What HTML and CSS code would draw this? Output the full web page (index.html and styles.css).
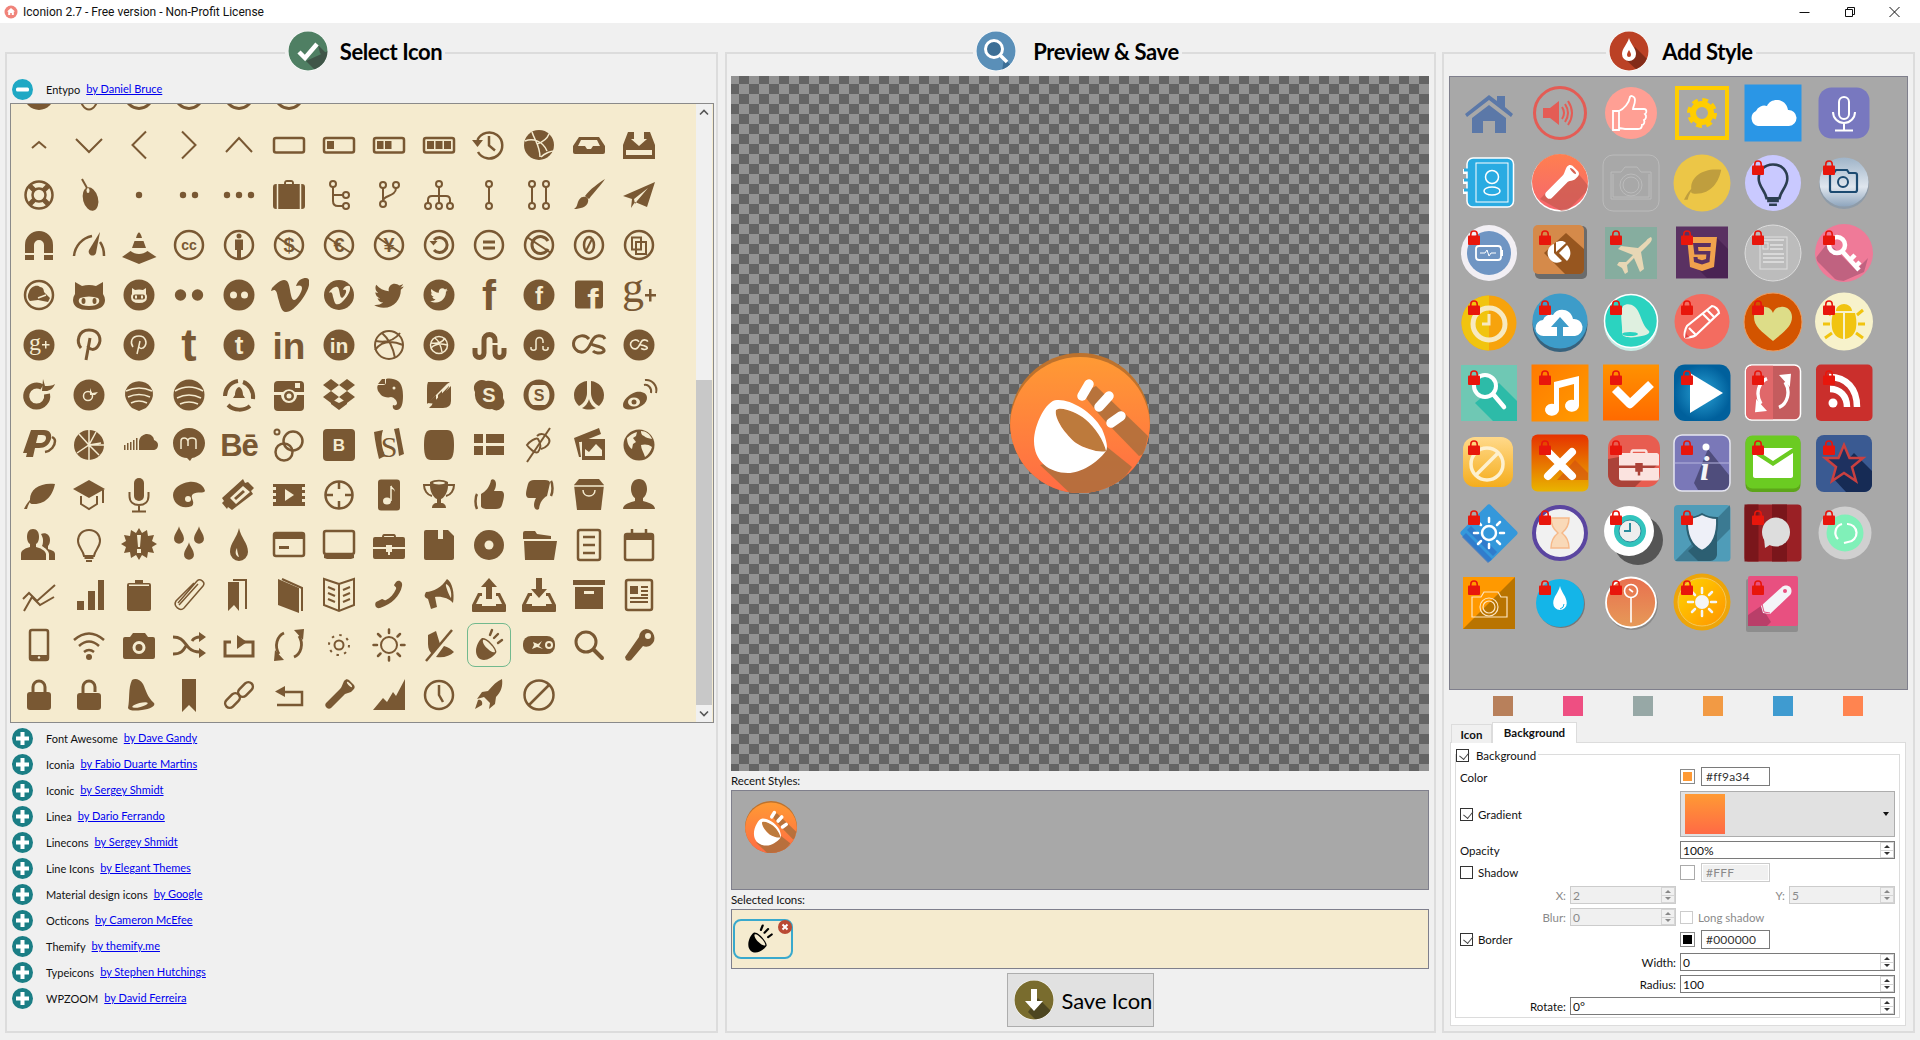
FILE: index.html
```html
<!DOCTYPE html>
<html lang="en">
<head>
<meta charset="utf-8">
<title>Iconion 2.7</title>
<link rel="stylesheet" href="styles.css">
</head>
<body>
<svg class="defs" aria-hidden="true">
<defs>
<linearGradient id="gOr" x1="0" y1="0" x2="0" y2="1"><stop offset="0" stop-color="#ff9a34"/><stop offset="1" stop-color="#ff6a45"/></linearGradient>
<linearGradient id="gFl" x1="0" y1="0" x2="0" y2="1"><stop offset="0" stop-color="#ff7f50"/><stop offset="1" stop-color="#f5666e"/></linearGradient>
<linearGradient id="gCam" x1="0" y1="0" x2="0" y2="1"><stop offset="0" stop-color="#9fb4c8"/><stop offset=".6" stop-color="#dfe6ee"/><stop offset="1" stop-color="#8ea5bd"/></linearGradient>
<linearGradient id="gMus" x1="0" y1="0" x2="1" y2="1"><stop offset="0" stop-color="#ff7a00"/><stop offset="1" stop-color="#ff9c00"/></linearGradient>
<linearGradient id="gChk" x1="0" y1="0" x2="0" y2="1"><stop offset="0" stop-color="#ff9200"/><stop offset="1" stop-color="#ff6a00"/></linearGradient>
<radialGradient id="gPlay"><stop offset="0" stop-color="#2aa3d6"/><stop offset="1" stop-color="#00609c"/></radialGradient>
<linearGradient id="gBlk" x1="0" y1="0" x2="0" y2="1"><stop offset="0" stop-color="#ffd98a"/><stop offset="1" stop-color="#f5ad1c"/></linearGradient>
<linearGradient id="gX" x1="0" y1="0" x2="0" y2="1"><stop offset="0" stop-color="#e63200"/><stop offset="1" stop-color="#e9b400"/></linearGradient>
<linearGradient id="gPin" x1="0" y1="0" x2="0" y2="1"><stop offset="0" stop-color="#e8704f"/><stop offset="1" stop-color="#e69a58"/></linearGradient>
<linearGradient id="gSun" x1="0" y1="0" x2="1" y2="1"><stop offset="0" stop-color="#ffd400"/><stop offset="1" stop-color="#ff9400"/></linearGradient>
<clipPath id="cBig"><circle cx="70" cy="70" r="70"/></clipPath>
<clipPath id="cH"><circle cx="20" cy="20" r="19.5"/></clipPath>
<clipPath id="c60"><circle cx="30" cy="30" r="28"/></clipPath>
<symbol id="beam" viewBox="0 0 40 40"><path d="M13 13c-3 2-6 8-6 13 0 5 3 9 8 9 4 0 9-3 12-7 1-1 0-3-1-5-3-5-9-11-13-10zm1 2c-1 2 2 7 5 9 2 2 5 4 7 3 0-3-3-6-5-8-2-2-5-5-7-4z" fill-rule="evenodd"/><path d="M23 5l-2 5M29 9l-4 4M33 15l-4 3" fill="none" stroke="currentColor" stroke-width="2.4" stroke-linecap="round"/></symbol>
<symbol id="beamBig" viewBox="0 0 140 140">
<circle cx="70" cy="70" r="70" fill="#bd722d"/>
<g clip-path="url(#cBig)"><circle cx="70" cy="74" r="70" fill="url(#gOr)"/>
<path fill="#ab6e3c" fill-opacity=".85" d="M72 40l14-7 52 50-4 18-5 2-33-34-8-9z"/>
<path fill="#ab6e3c" fill-opacity=".85" d="M30 112l32 30h40l20-28-25-20z"/></g>
<path fill="#bd7a3c" d="M46 57c-2 9 10 25 20 33 9 6 24 10 30 8-2-10-11-24-21-32-8-6-23-13-29-9z"/>
<path fill="#fff" fill-rule="evenodd" d="M47 47C36 47 24 72 24 88c0 20 15 32 34 32 13 0 29-10 38-22 2-3 1-10-4-22C82 58 60 46 47 47zm-1 10c-2 9 10 25 20 33 9 6 24 10 30 8-2-10-11-24-21-32-8-6-23-13-29-9z"/>
<path d="M79 31l-7 12M99 43L89 54M111 63l-10 7" fill="none" stroke="#fff" stroke-width="9.5" stroke-linecap="round"/>
</symbol>
<symbol id="lk" viewBox="0 0 12 15"><path d="M2.8 7V4.2a3.2 3.2 0 0 1 6.4 0V7" fill="none" stroke="#e8160c" stroke-width="1.6"/><rect y="5.6" width="12" height="9.4" rx="1" fill="#e8160c"/></symbol>
<symbol id="leaf" viewBox="0 0 40 40"><path d="M5 34c3-6 6-10 12-14 5-3 9-5 13-6-6 2-12 5-16 9-3 3-5 7-6 11zM11 24C11 14 22 7 36 9c-2 10-8 20-21 20-2 0-3 0-4-1z"/></symbol>
<symbol id="bulb" viewBox="0 0 40 40"><path d="M20 5c-7 0-11 5-11 11 0 6 5 9 6 15h10c1-6 6-9 6-15 0-6-4-11-11-11z" fill="none" stroke="currentColor" stroke-width="2"/><path d="M15.5 31h9v3h-9zM17 35h6v2h-6z"/></symbol>
<symbol id="cam" viewBox="0 0 40 40"><path fill-rule="evenodd" d="M14 8h12l3 4h5a2 2 0 0 1 2 2v18a2 2 0 0 1-2 2H6a2 2 0 0 1-2-2V14a2 2 0 0 1 2-2h5zm6 8a6.5 6.5 0 1 0 0 13 6.500 6.500 0 0 0 0-13zm0 3a3.500 3.500 0 1 1 0 7 3.500 3.500 0 0 1 0-7z"/></symbol>
<symbol id="case" viewBox="0 0 40 40"><path d="M15 9h10c1 0 2 1 2 3h7a2 2 0 0 1 2 2v8H23v-2h-6v2H4v-8a2 2 0 0 1 2-2h7c0-2 1-3 2-3zm0 3h10c0-1 0-1-1-1h-8c-1 0-1 0-1 1zM4 24h13v3h2v3h2v-3h2v-3h13v8a2 2 0 0 1-2 2H6a2 2 0 0 1-2-2z" fill-rule="evenodd"/></symbol>
<symbol id="srch" viewBox="0 0 40 40"><circle cx="17" cy="17" r="10" fill="none" stroke="currentColor" stroke-width="3"/><path d="M24.500 24.500L33 33" fill="none" stroke="currentColor" stroke-width="4" stroke-linecap="round"/></symbol>
<symbol id="cyc" viewBox="0 0 40 40"><path d="M15 8C8 11 5 21 10 29M25 32c7-3 10-13 5-21" fill="none" stroke="currentColor" stroke-width="2.800"/><path d="M6 25l9 10-10 1zM34 15L25 5l10-1z"/></symbol>
<symbol id="drop" viewBox="0 0 40 40"><path d="M20 4c2 9 9 14 9 23a9 9 0 0 1-18 0c0-9 7-14 9-23z"/></symbol>
<symbol id="fl" viewBox="0 0 40 40"><path fill-rule="evenodd" d="M25 6c2-2 3-2 5-1l5 5c1 2 1 3-1 5l-2 2c-2 1-4 1-6 2L12 33c-1 1-3 1-4 0l-1-1c-1-1-1-3 0-4L21 14c2-2 2-4 4-8zM28 7c-1 1 4 6 5 5s-4-6-5-5z"/></symbol>
<symbol id="tw" viewBox="0 0 24 24"><path d="M22.460 6c-.77.35-1.600.58-2.460.69.88-.53 1.560-1.370 1.880-2.380-.83.5-1.750.85-2.720 1.050C18.370 4.500 17.260 4 16 4c-2.350 0-4.270 1.920-4.270 4.290 0 .34.04.67.11.98C8.280 9.090 5.110 7.380 3 4.790c-.37.63-.58 1.370-.58 2.150 0 1.490.75 2.810 1.910 3.560-.71 0-1.370-.2-1.950-.5v.03c0 2.080 1.480 3.820 3.440 4.210a4.220 4.220 0 0 1-1.930.07 4.280 4.280 0 0 0 4 2.980 8.520 8.520 0 0 1-5.330 1.840c-.34 0-.68-.02-1.020-.06C3.440 20.290 5.700 21 8.120 21 16 21 20.330 14.460 20.330 8.790c0-.19 0-.37-.01-.56.84-.6 1.560-1.360 2.140-2.230z"/></symbol>
<symbol id="vim" viewBox="0 0 40 40"><path d="M3 13c4-4 8-8 12-8 4 0 5 4 6 10 1 6 2 10 4 10 3 0 8-8 8-12 0-3-3-3-6-2 2-6 6-8 10-8 3 0 4 3 3 7-1 8-14 27-23 27-5 0-6-8-8-14-1-6-2-8-4-8l-3 1z"/></symbol>
<symbol id="lfm" viewBox="0 0 40 40"><path d="M20 14C16 9 8 10 5 16c-2 6 3 12 9 11 5-1 7-7 9-11 2-4 5-6 9-5 2 0 3 1 4 3M22 19c2 1 6 2 9 3 4 1 5 4 3 5-3 2-8 1-10-1" fill="none" stroke="currentColor" stroke-width="3"/></symbol>
</defs>
</svg>

<header class="titlebar">
  <svg class="appicon" viewBox="0 0 14 14"><circle cx="7" cy="7" r="6.500" fill="#f0837a"/><path d="M7 3L3 6.500h1.200V10h2V8h1.600v2h2V6.500H11z" fill="#fff"/></svg>
  <span class="apptitle">Iconion 2.7 - Free version - Non-Profit License</span>
  <div class="winctl">
    <svg viewBox="0 0 45 20"><path d="M17.500 10.500h10" stroke="#111" fill="none"/></svg>
    <svg viewBox="0 0 45 20"><path d="M18.500 7.500h7v7h-7zM20.500 7.500v-2h7v7h-2" stroke="#111" fill="none"/></svg>
    <svg viewBox="0 0 45 20"><path d="M17.500 5l10 10M27.500 5l-10 10" stroke="#111" fill="none"/></svg>
  </div>
</header>

<main class="panels">

<section class="panel p-left">
  <div class="head h-left">
    <svg class="hicon" viewBox="0 0 40 40"><circle cx="20" cy="20" r="20" fill="#fff"/><circle cx="20" cy="20" r="19.500" fill="#4f7f63"/><path clip-path="url(#cH)" d="M18 30L40 20v20H28zM30 14l10 10v6l-8-8z" fill="#333" fill-opacity=".55"/><path d="M11 21l6 6 12-14" fill="none" stroke="#fff" stroke-width="4.500"/></svg>
    <h2>Select Icon</h2>
  </div>
  <div class="fam fam-open"><svg class="tog" viewBox="0 0 21 21"><circle cx="10.500" cy="10.500" r="10.500" fill="#1fa8c4"/><rect x="4" y="8.500" width="13" height="4" rx="1.500" fill="#fff"/></svg><span>Entypo</span><a href="#">by Daniel Bruce</a></div>

  <div class="iconbox">
    <div class="scrollarea">
    <div class="igrid">
<!-- partial row -->
<span class="cell"><svg viewBox="0 0 40 40"><circle cx="20" cy="20" r="15"/></svg></span>
<span class="cell"><svg viewBox="0 0 40 40"><ellipse class="o" cx="20" cy="20" rx="9" ry="14.500"/></svg></span>
<span class="cell"><svg viewBox="0 0 40 40"><circle class="o w3" cx="20" cy="20" r="13.500"/></svg></span>
<span class="cell"><svg viewBox="0 0 40 40"><circle class="o w3" cx="20" cy="20" r="13.500"/></svg></span>
<span class="cell"><svg viewBox="0 0 40 40"><circle class="o w3" cx="20" cy="20" r="13.500"/></svg></span>
<span class="cell"><svg viewBox="0 0 40 40"><circle class="o w3" cx="20" cy="20" r="13.500"/></svg></span>
<span class="cell"></span><span class="cell"></span><span class="cell"></span><span class="cell"></span><span class="cell"></span><span class="cell"></span><span class="cell"></span>

<!-- row 0 -->
<span class="cell"><svg viewBox="0 0 40 40"><path class="o" d="M13 23l7-6 7 6"/></svg></span>
<span class="cell"><svg viewBox="0 0 40 40"><path class="o" d="M7 14l13 13 13-13"/></svg></span>
<span class="cell"><svg viewBox="0 0 40 40"><path class="o" d="M27 6.500L13.500 20 27 33.500"/></svg></span>
<span class="cell"><svg viewBox="0 0 40 40"><path class="o" d="M13 6.500L26.500 20 13 33.500"/></svg></span>
<span class="cell"><svg viewBox="0 0 40 40"><path class="o" d="M7 27l13-14 13 14"/></svg></span>
<span class="cell"><svg viewBox="0 0 40 40"><rect class="o w25" x="5" y="13" width="30" height="14.500" rx="2"/></svg></span>
<span class="cell"><svg viewBox="0 0 40 40"><rect class="o w25" x="5" y="13" width="30" height="14.500" rx="2"/><rect x="8" y="16" width="7" height="8"/></svg></span>
<span class="cell"><svg viewBox="0 0 40 40"><rect class="o w25" x="5" y="13" width="30" height="14.500" rx="2"/><rect x="8" y="16" width="6.500" height="8"/><rect x="16" y="16" width="6.500" height="8"/></svg></span>
<span class="cell"><svg viewBox="0 0 40 40"><rect class="o w25" x="5" y="13" width="30" height="14.500" rx="2"/><rect x="8" y="16" width="7" height="8"/><rect x="16.500" y="16" width="7" height="8"/><rect x="25" y="16" width="7" height="8"/></svg></span>
<span class="cell"><svg viewBox="0 0 40 40"><path class="o w25" d="M8.500 15A13 13 0 1 1 9 27"/><path d="M3 15h11l-5.500 7z"/><path class="o w25" d="M20 11v9.500l6 5"/></svg></span>
<span class="cell"><svg viewBox="0 0 40 40"><circle cx="20" cy="20" r="15"/><path class="ks" d="M6 16c8-3 18 0 22 10M13 7c3 9 8 14 8 25M30 9c-2 5-6 8-12 10M22 32c4-4 10-6 13-6"/></svg></span>
<span class="cell"><svg viewBox="0 0 40 40"><path d="M10 12h20l6 9v6a2 2 0 0 1-2 2H6a2 2 0 0 1-2-2v-6z"/><path class="k" d="M12 15h16l3 6h-7l-2 3h-4l-2-3H9z"/></svg></span>
<span class="cell"><svg viewBox="0 0 40 40"><path d="M9 7h6v7h-3l8 7 8-7h-3V7h6l5 13v14H4V20z"/><rect class="k" x="7" y="25" width="26" height="5"/></svg></span>

<!-- row 1 -->
<span class="cell"><svg viewBox="0 0 40 40"><circle class="o w25" cx="20" cy="20" r="13.500"/><circle class="o w25" cx="20" cy="20" r="6.500"/><path class="o w5" d="M10 10l5.500 5.500M30 10l-5.500 5.500M10 30l5.500-5.500M30 30l-5.500-5.500"/></svg></span>
<span class="cell"><svg viewBox="0 0 40 40"><ellipse cx="21.500" cy="24" rx="7.500" ry="12" transform="rotate(-15 21.500 24)"/><path class="o" d="M13 4l5 9"/><ellipse class="k" cx="19" cy="15.500" rx="1.500" ry="2.500"/></svg></span>
<span class="cell"><svg viewBox="0 0 40 40"><circle cx="20" cy="20" r="3.200"/></svg></span>
<span class="cell"><svg viewBox="0 0 40 40"><circle cx="14" cy="20" r="3.200"/><circle cx="26" cy="20" r="3.200"/></svg></span>
<span class="cell"><svg viewBox="0 0 40 40"><circle cx="8" cy="20" r="3.200"/><circle cx="20" cy="20" r="3.200"/><circle cx="32" cy="20" r="3.200"/></svg></span>
<span class="cell"><svg viewBox="0 0 40 40"><path d="M15 9c0-3 1-4 3-4h4c2 0 3 1 3 4h8a3 3 0 0 1 3 3v19a3 3 0 0 1-3 3H7a3 3 0 0 1-3-3V12a3 3 0 0 1 3-3zm2 0h6c0-2 0-2-1-2h-4c-1 0-1 0-1 2z" fill-rule="evenodd"/><path class="ks" d="M8.500 9v25M31.500 9v25"/></svg></span>
<span class="cell"><svg viewBox="0 0 40 40"><circle class="o" cx="14" cy="9" r="3"/><circle class="o" cx="27" cy="20" r="3"/><circle class="o" cx="27" cy="31" r="3"/><path class="o" d="M14 12v14q0 5 5 5h5M14 20h10"/></svg></span>
<span class="cell"><svg viewBox="0 0 40 40"><circle class="o" cx="14" cy="10" r="3"/><circle class="o" cx="27" cy="10" r="3"/><circle class="o" cx="14" cy="29" r="3"/><path class="o" d="M14 13v13M27 13c0 9-13 7-13 13"/></svg></span>
<span class="cell"><svg viewBox="0 0 40 40"><circle class="o" cx="20" cy="9" r="3"/><circle class="o" cx="9" cy="31" r="3"/><circle class="o" cx="20" cy="31" r="3"/><circle class="o" cx="31" cy="31" r="3"/><path class="o" d="M20 12v16M9 28v-3q0-4 4-4h14q4 0 4 4v3"/></svg></span>
<span class="cell"><svg viewBox="0 0 40 40"><circle class="o" cx="20" cy="9" r="3"/><circle class="o" cx="20" cy="31" r="3"/><path class="o" d="M20 12v16"/></svg></span>
<span class="cell"><svg viewBox="0 0 40 40"><circle class="o" cx="13" cy="9" r="3"/><circle class="o" cx="13" cy="31" r="3"/><path class="o" d="M13 12v16"/><circle class="o" cx="27" cy="9" r="3"/><circle class="o" cx="27" cy="31" r="3"/><path class="o" d="M27 12v16"/></svg></span>
<span class="cell"><svg viewBox="0 0 40 40"><path d="M36 4C33 9 25 17 20 24l-4-3C21 14 30 8 36 4zM14 22c4-1 6 2 5 5-1 5-8 7-14 7 3-2 3-4 4-7 1-3 3-5 5-5z"/></svg></span>
<span class="cell"><svg viewBox="0 0 40 40"><path d="M36 7L4 21l9 3-1 9 4-6 12 5zM15 24l14-11-11 13-2 3z"/></svg></span>

<!-- row 2 -->
<span class="cell"><svg viewBox="0 0 40 40"><path d="M6 20a14 14 0 0 1 28 0v8h-9v-8a5 5 0 0 0-10 0v8H6zM6 30h9v5H6zM25 30h9v5h-9z"/></svg></span>
<span class="cell"><svg viewBox="0 0 40 40"><path class="o w25" d="M5 31C6 21 13 13 23 11M31 17c3 4 4 9 4 14"/><path d="M31 7L20 25c-2 5 5 8 7 3z"/></svg></span>
<span class="cell"><svg viewBox="0 0 40 40"><path d="M17 13q3-11 6 0zM15.500 16h9l2.500 7H13zM11.500 26c5 4 12 4 17 0l9 6-17.500 7L3 32z"/></svg></span>
<span class="cell"><svg viewBox="0 0 40 40"><circle class="o w25" cx="20" cy="20" r="14"/><text class="t" x="20" y="25" font-size="14">cc</text></svg></span>
<span class="cell"><svg viewBox="0 0 40 40"><circle class="o w25" cx="20" cy="20" r="14"/><circle cx="20" cy="11" r="2.500"/><path d="M16 14.500h8V25h-2v9h-4v-9h-2z"/></svg></span>
<span class="cell"><svg viewBox="0 0 40 40"><circle class="o w25" cx="20" cy="20" r="14"/><text class="t" x="20" y="27" font-size="20">$</text><path class="o" d="M8 12l24 16"/></svg></span>
<span class="cell"><svg viewBox="0 0 40 40"><circle class="o w25" cx="20" cy="20" r="14"/><text class="t" x="20" y="27" font-size="20">€</text><path class="o" d="M8 12l24 16"/></svg></span>
<span class="cell"><svg viewBox="0 0 40 40"><circle class="o w25" cx="20" cy="20" r="14"/><text class="t" x="20" y="27" font-size="20">¥</text><path class="o" d="M8 12l24 16"/></svg></span>
<span class="cell"><svg viewBox="0 0 40 40"><circle class="o w25" cx="20" cy="20" r="14"/><path class="o w3" d="M15 15a7.500 7.500 0 1 1 0 10"/><path d="M10.500 16h8l-4 4.500z"/></svg></span>
<span class="cell"><svg viewBox="0 0 40 40"><circle class="o w25" cx="20" cy="20" r="14"/><rect x="14" y="15.500" width="12" height="3"/><rect x="14" y="21.500" width="12" height="3"/></svg></span>
<span class="cell"><svg viewBox="0 0 40 40"><circle class="o w25" cx="20" cy="20" r="14"/><path class="o w3" d="M29 16a8.500 8.500 0 1 0 0 8"/><path class="o" d="M8 12l24 16"/></svg></span>
<span class="cell"><svg viewBox="0 0 40 40"><circle class="o w25" cx="20" cy="20" r="14"/><ellipse class="o w25" cx="20" cy="20" rx="5" ry="8"/><path class="o" d="M17 26l6-12"/></svg></span>
<span class="cell"><svg viewBox="0 0 40 40"><circle class="o w25" cx="20" cy="20" r="14"/><rect class="o" x="13" y="12.500" width="9" height="12"/><rect class="o" x="17" y="17" width="10" height="12"/></svg></span>

<!-- row 3 -->
<span class="cell"><svg viewBox="0 0 40 40"><circle class="o w25" cx="20" cy="20" r="14"/><path d="M10 17c1-5 8-8 11-5 3 0 4 3 4 5l6 6-2 4-10-2-8 1c-2-2-3-5-1-9z"/><path class="ks" d="M19 23l8-3"/></svg></span>
<span class="cell"><svg viewBox="0 0 40 40"><path d="M6 7l7 4q7-2 14 0l7-4v12q2 3 2 6 0 10-16 10T4 25q0-3 2-6z"/><path class="k" d="M11 23q9-3 18 0c3 3 1 8-9 8s-12-5-9-8z"/><ellipse cx="14.500" cy="26" rx="2" ry="3"/><ellipse cx="25.500" cy="26" rx="2" ry="3"/></svg></span>
<span class="cell"><svg viewBox="0 0 40 40"><circle cx="20" cy="20" r="15.500"/><path class="k" d="M13 13l3 2q4-1 8 0l3-2v6q1 1 1 3 0 6-8 6t-8-6q0-2 1-3z"/><rect x="14" y="19.500" width="12" height="5" rx="2"/><rect class="k" x="16" y="20.500" width="2" height="3"/><rect class="k" x="22" y="20.500" width="2" height="3"/></svg></span>
<span class="cell"><svg viewBox="0 0 40 40"><circle cx="11.500" cy="20" r="5.700"/><circle cx="28.500" cy="20" r="5.700"/></svg></span>
<span class="cell"><svg viewBox="0 0 40 40"><circle cx="20" cy="20" r="15.500"/><circle class="k" cx="14.500" cy="20" r="3.500"/><circle class="k" cx="25.500" cy="20" r="3.500"/></svg></span>
<span class="cell"><svg viewBox="0 0 40 40"><use href="#vim"/></svg></span>
<span class="cell"><svg viewBox="0 0 40 40"><circle cx="20" cy="20" r="15"/><use class="kf" href="#vim" x="9" y="9" width="22" height="22"/></svg></span>
<span class="cell"><svg viewBox="0 0 40 40"><use href="#tw" x="3" y="3" width="34" height="34"/></svg></span>
<span class="cell"><svg viewBox="0 0 40 40"><circle cx="20" cy="20" r="15.500"/><use class="kf" href="#tw" x="10" y="10" width="20" height="20"/></svg></span>
<span class="cell"><svg viewBox="0 0 40 40"><text class="t" x="20" y="35" font-size="42">f</text></svg></span>
<span class="cell"><svg viewBox="0 0 40 40"><circle cx="20" cy="20" r="15.500"/><text class="t tk" x="20" y="29" font-size="24">f</text></svg></span>
<span class="cell"><svg viewBox="0 0 40 40"><rect x="6" y="5.500" width="28" height="28" rx="3"/><text class="t tk" x="24" y="37" font-size="34">f</text></svg></span>
<span class="cell"><svg viewBox="0 0 40 40"><text class="t ts" x="14" y="27" font-size="44">g</text><path d="M26 19h4v-5h2.500v5h4.500v2.500h-4.500v5H30v-5h-4z"/></svg></span>

<!-- row 4 -->
<span class="cell"><svg viewBox="0 0 40 40"><circle cx="20" cy="20" r="15.500"/><text class="t ts tk" x="16" y="25" font-size="24">g</text><path class="k" d="M23 19h3v-3h1.500v3h3v1.500h-3v3H26v-3h-3z"/></svg></span>
<span class="cell"><svg viewBox="0 0 40 40"><path class="o w3" d="M12 23c-5-6-3-18 8-18 11 0 13 10 9 16-3 5-9 4-10 0"/><path class="o w3" d="M21 13l-4 22"/></svg></span>
<span class="cell"><svg viewBox="0 0 40 40"><circle cx="20" cy="20" r="15.500"/><path class="ks w2" d="M14 22c-3-4-2-11 6-11 7 0 8 7 6 10-2 3-5 3-6 1M21 16l-3 13"/></svg></span>
<span class="cell"><svg viewBox="0 0 40 40"><text class="t" x="20" y="36" font-size="46">t</text></svg></span>
<span class="cell"><svg viewBox="0 0 40 40"><circle cx="20" cy="20" r="15.500"/><text class="t tk" x="20" y="29" font-size="26">t</text></svg></span>
<span class="cell"><svg viewBox="0 0 40 40"><text class="t" x="20" y="34" font-size="37">in</text></svg></span>
<span class="cell"><svg viewBox="0 0 40 40"><circle cx="20" cy="20" r="15.500"/><text class="t tk" x="20" y="28" font-size="21">in</text></svg></span>
<span class="cell"><svg viewBox="0 0 40 40"><circle class="o" cx="20" cy="20" r="14"/><path class="o" d="M7 16c10 2 18 0 24-8M13 8c7 6 11 14 13 25M6 25c6-8 16-10 28-5"/></svg></span>
<span class="cell"><svg viewBox="0 0 40 40"><circle cx="20" cy="20" r="15.500"/><circle class="ks" cx="20" cy="20" r="8.500"/><path class="ks" d="M12 18c6 1 11 0 14-5M16 13c4 3 6 8 7 14M12 23c4-4 9-5 16-3"/></svg></span>
<span class="cell"><svg viewBox="0 0 40 40"><path class="o w5" d="M6 23v5a4.500 4.500 0 0 0 9 0V15a5.500 5.500 0 0 1 11 0v3M26 20v8a4 4 0 0 0 9 0v-5"/></svg></span>
<span class="cell"><svg viewBox="0 0 40 40"><circle cx="20" cy="20" r="15.500"/><path class="ks w25" d="M12 22v2a3 3 0 0 0 5 0v-8a3.500 3.500 0 0 1 7 0v2M24 21v3a3 3 0 0 0 5 0v-2"/></svg></span>
<span class="cell"><svg viewBox="0 0 40 40"><use href="#lfm"/></svg></span>
<span class="cell"><svg viewBox="0 0 40 40"><circle cx="20" cy="20" r="15.500"/><use class="kc" href="#lfm" x="9" y="9" width="22" height="22"/></svg></span>

<!-- row 5 -->
<span class="cell"><svg viewBox="0 0 40 40"><path class="o w6" d="M28 19a10.500 10.500 0 1 1-5-7"/><path d="M24 4l2 7c3 0 7 0 10-2-2 5-6 7-9 7h-4z"/></svg></span>
<span class="cell"><svg viewBox="0 0 40 40"><circle cx="20" cy="20" r="15.500"/><circle class="ks w3" cx="19" cy="21" r="4.500"/><path class="k" d="M21 13l2 5 6-1-3 3h-5z"/></svg></span>
<span class="cell"><svg viewBox="0 0 40 40"><path d="M7 24a14 13 0 1 1 26 0c-2 5-6 9-6 9L20 36l-7-3s-4-4-6-9z"/><path class="ks w2" d="M7 16q13-6 26 0M9 22q11-5 22 0M12 28q8-4 16 0"/></svg></span>
<span class="cell"><svg viewBox="0 0 40 40"><circle cx="20" cy="20" r="15.500"/><path class="ks w2" d="M6 16q14-8 28 0M8 23q12-6 24 0M11 29q9-4 18 0"/></svg></span>
<span class="cell"><svg viewBox="0 0 40 40"><path class="o w4" d="M19 6C11 7 6 14 6 21M9 30c6 6 16 6 22 1M34 24c1-8-4-15-10-17"/><path d="M20 12c-3 1-4 5-4 8l-2 3h12l-2-3c0-3-1-7-4-8z"/></svg></span>
<span class="cell"><svg viewBox="0 0 40 40"><path d="M9 6h22a4 4 0 0 1 4 4v22a4 4 0 0 1-4 4H9a4 4 0 0 1-4-4V10a4 4 0 0 1 4-4z"/><path class="k" d="M5 17h9a8 8 0 0 1 12 0h9v3h-7a8 8 0 1 1-16 0H5z"/><circle cx="20" cy="21" r="5"/><circle class="k" cx="20" cy="21" r="2.500"/><rect class="k" x="26" y="8" width="5" height="5"/></svg></span>
<span class="cell"><svg viewBox="0 0 40 40"><path d="M12 4l8 6-8 6-8-6zM28 4l8 6-8 6-8-6zM12 16l8 6-8 6-8-6zM28 16l8 6-8 6-8-6zM20 28l8-4 0 5-8 6-8-6 0-5z"/></svg></span>
<span class="cell"><svg viewBox="0 0 40 40"><path d="M13 4h3v5H9zM17 4c4-1 9 0 12 2 4 3 5 9 5 15 0 7-1 13-6 14-3 0-5-2-4-5 2 1 4 0 4-2 0-3-4-6-6-6-3 1-8 0-10-2l-3-4c-1-3-1-5 0-6h5c2 0 3-1 3-3z"/><circle class="k" cx="25" cy="13" r="1.500"/></svg></span>
<span class="cell"><svg viewBox="0 0 40 40"><path d="M9 7h22l-3 2L8 29V14q0-5 1-7zM32 11v15q0 7-8 7H10l22-22zM13 29L30 11v1L14 33z"/><path d="M8 28l9-8v6h2v-6l4-4v13h-4M18 17h-5c-1 0-1 0-1 1v6l-4 4"/></svg></span>
<span class="cell"><svg viewBox="0 0 40 40"><path d="M12 5a8 8 0 0 1 5 1 15 15 0 0 1 17 17 8 8 0 0 1-11 11A15 15 0 0 1 6 17 8 8 0 0 1 12 5z"/><text class="t tk" x="20" y="27" font-size="20">S</text></svg></span>
<span class="cell"><svg viewBox="0 0 40 40"><circle cx="20" cy="20" r="15.500"/><path class="k" d="M14 10h12c6 3 6 17 0 20H14c-6-3-6-17 0-20z"/><text class="t" x="20" y="26" font-size="16">S</text></svg></span>
<span class="cell"><svg viewBox="0 0 40 40"><path d="M18 6C10 7 5 13 5 20c0 5 2 8 5 11 5-2 8-8 8-13zM22 6v12c0 5 3 11 8 13 3-3 5-6 5-11 0-7-5-13-13-14zM20 24c-1 4-4 8-7 9 4 2 10 2 14 0-3-1-6-5-7-9z"/></svg></span>
<span class="cell"><svg viewBox="0 0 40 40"><path d="M17 17c-7 2-13 8-13 13s6 5 11 4c7-2 13-6 13-11s-5-7-11-6z"/><ellipse class="k" cx="15" cy="27" rx="6" ry="4.500"/><circle cx="15" cy="27" r="2.500"/><path class="o" d="M25 10c4-1 8 3 7 8M26 5c7-1 13 6 11 13"/></svg></span>

<!-- row 6 -->
<span class="cell"><svg viewBox="0 0 40 40"><path class="o w25" d="M26 27c6-1 10-6 10-11 0-2-1-3-3-4"/><path fill-rule="evenodd" d="M12 5h13c6 0 8 4 7 9-2 6-6 9-12 9h-4l-2 9H7l1-4H4zm7 5l-2 8h4c3 0 6-2 6-5 0-2-1-3-4-3z"/></svg></span>
<span class="cell"><svg viewBox="0 0 40 40"><circle cx="20" cy="20" r="15"/><path class="ks w2" d="M20 5v15l-10-11M35 20H20l7-13M30 30L20 20l12-2M8 28l12-8v15"/></svg></span>
<span class="cell"><svg viewBox="0 0 40 40"><path d="M20 16c1-5 5-7 8-7 4 0 7 3 7 6 3 1 4 3 4 5 0 3-2 5-5 5H20zM17 13h1.500v12H17zM14 15h1.500v10H14zM11 17h1.500v8H11zM8 18h1.500v7H8zM5 20h1.500v5H5z"/></svg></span>
<span class="cell"><svg viewBox="0 0 40 40"><path d="M20 3C11 3 4 10 4 18c0 9 7 15 14 15l3 3 2-3c7-1 13-7 13-15C36 10 29 3 20 3z"/><path class="ks w25" d="M12 24v-8c0-4 6-4 7 0v5M19 16c0-4 8-4 8 0v8"/></svg></span>
<span class="cell"><svg viewBox="0 0 40 40"><text class="t tb" x="20" y="31" font-size="31">Bē</text></svg></span>
<span class="cell"><svg viewBox="0 0 40 40"><circle class="o w25" cx="24" cy="16" r="9.500"/><circle class="o w25" cx="15" cy="27" r="8.500"/><circle class="o" cx="8" cy="7" r="2.500"/></svg></span>
<span class="cell"><svg viewBox="0 0 40 40"><rect x="4" y="4" width="32" height="32" rx="4"/><text class="t tk" x="20" y="26" font-size="17">B</text></svg></span>
<span class="cell"><svg viewBox="0 0 40 40"><path d="M14 5l-9 2c1 9 3 19 5 27l6-3c-3-8-5-17-2-26zM25 4l5-1 5 26-5 2c-1-9-3-19-5-27z"/><text class="t ts" x="20" y="32" font-size="30">S</text></svg></span>
<span class="cell"><svg viewBox="0 0 40 40"><path d="M12 5h16c5 0 7 4 7 15s-2 15-7 15H12c-5 0-7-4-7-15S7 5 12 5z"/></svg></span>
<span class="cell"><svg viewBox="0 0 40 40"><path d="M5 9h9v9H5zM17 9h18v9H17zM5 21h9v9H5zM17 21h18v9H17z"/></svg></span>
<span class="cell"><svg viewBox="0 0 40 40"><path class="o" d="M31 3L8 37"/><path class="o" d="M8 20c2-3 9-8 11-6 2 3 4 8 0 13-3 2-9-4-11-7zM18 11c3-3 8-3 12 3 2 4-3 9-8 10"/></svg></span>
<span class="cell"><svg viewBox="0 0 40 40"><path d="M5 13L30 3l2 6-20 8h-2l2 15h-2zM13 14h23v21H13z"/><path class="k" d="M16 31v-7l4 3 7-8 6 6v6z"/></svg></span>
<span class="cell"><svg viewBox="0 0 40 40"><circle cx="20" cy="20" r="15.500"/><path class="k" d="M8 13c3-3 6-5 10-6l-1 4-3 2 3 4-3 2-1 5c-3-2-5-6-5-11zM22 6c5 0 9 3 11 8-3-1-6-1-8-3-3-1-3-4-3-5zM22 20c3-1 8-1 11 2-1 4-4 8-7 10-1-4-4-8-4-12z"/></svg></span>

<!-- row 7 -->
<span class="cell"><svg viewBox="0 0 40 40"><use href="#leaf"/></svg></span>
<span class="cell"><svg viewBox="0 0 40 40"><path d="M20 5l16 9-16 9-16-9z"/><path class="o" d="M12 21v8l8 5 8-5v-8M34 15v13"/></svg></span>
<span class="cell"><svg viewBox="0 0 40 40"><rect x="15" y="3" width="10" height="23" rx="5"/><path class="o" d="M10.500 17v4c0 6 4 9 9.500 9s9.500-3 9.500-9v-4M20 30v6M13 36.500h14"/></svg></span>
<span class="cell"><svg viewBox="0 0 40 40"><path d="M20 7c9-1 15 4 16 9-1 3-8 0-12 3-4 3 3 8-1 12C12 35 4 28 4 20 4 13 12 8 20 7z"/><circle class="k" cx="19" cy="24" r="3"/></svg></span>
<span class="cell"><svg viewBox="0 0 40 40"><path d="M24 4l2 4 3-1 6 6-3 3 2 3-21 16-4-3-1 2-5-6 2-2-2-3z"/><path class="k" d="M24 11l7 6-14 12-6-6zm0 4l-9 8 2 2 9-8z" fill-rule="evenodd"/></svg></span>
<span class="cell"><svg viewBox="0 0 40 40"><path d="M4 9h32v22H4zM4 12v3h3v-3zM4 18v3h3v-3zM4 24v3h3v-3zM33 12v3h3v-3zM33 18v3h3v-3zM33 24v3h3v-3z" fill-rule="evenodd"/><path class="k" d="M16 14l9 6-9 6z"/></svg></span>
<span class="cell"><svg viewBox="0 0 40 40"><circle class="o w25" cx="20" cy="20" r="13.500"/><path class="o w25" d="M20 6v8M20 26v8M6 20h8M26 20h8"/></svg></span>
<span class="cell"><svg viewBox="0 0 40 40"><rect x="9" y="4.500" width="22" height="31" rx="3"/><path class="ks w2" d="M22 11v15"/><ellipse class="k" cx="18" cy="26" rx="4" ry="3.500"/><path class="k" d="M22 10c1 3 4 3 4 7-1-3-3-3-4-3z"/></svg></span>
<span class="cell"><svg viewBox="0 0 40 40"><path d="M11 7c5-3 13-3 18 0v4c0 6-4 12-7 13v4c3 0 5 2 5 5H13c0-3 2-5 5-5v-4c-3-1-7-7-7-13z"/><path class="o" d="M11 10H5c0 5 3 10 8 11M29 10h6c0 5-3 10-8 11"/><ellipse class="k" cx="20" cy="8" rx="6" ry="1.500"/></svg></span>
<span class="cell"><svg viewBox="0 0 40 40"><path d="M12 19c4-2 9-7 10-14 3-2 5 1 5 4 0 3-1 5-2 7h7c2 0 3 2 3 4 0 3-1 6-2 10-1 3-3 4-6 4H18c-3 0-6-1-6-3z"/><path class="o w25" d="M8 19c-2 3-2 11 0 15"/></svg></span>
<span class="cell"><svg viewBox="0 0 40 40"><path d="M28 21c-4 2-7 6-8 13-3 2-5-1-5-4 0-3 1-5 2-7h-7c-2 0-3-2-3-4 0-3 1-6 2-10 1-3 3-4 6-4h11c3 0 5 1 5 3z"/><path class="o w25" d="M32 6c2 3 2 11 0 15"/></svg></span>
<span class="cell"><svg viewBox="0 0 40 40"><path d="M10 4h20l5 6-3 25H8L5 10z"/><path class="ks w25" d="M5 11h30M14 15c0 8 12 8 12 0"/></svg></span>
<span class="cell"><svg viewBox="0 0 40 40"><path d="M20 4c5 0 8 4 8 10 0 4-2 8-4 9v3c4 1 12 3 12 8H4c0-5 8-7 12-8v-3c-2-1-4-5-4-9 0-6 3-10 8-10z"/></svg></span>

<!-- row 8 -->
<span class="cell"><svg viewBox="0 0 40 40"><path d="M14 4c4 0 6 3 6 8 0 3-1 6-3 7v3c4 1 9 3 10 7v6H2v-6c0-4 5-6 9-7v-3c-2-1-3-4-3-7 0-5 2-8 6-8z"/><path d="M22 9c4-2 9 0 9 6 0 3-1 5-2 6v3c3 1 7 2 7 5v6h-6v-6c0-3-4-6-7-8 1-2 1-4 1-6s-1-4-2-6z"/></svg></span>
<span class="cell"><svg viewBox="0 0 40 40"><use href="#bulb"/></svg></span>
<span class="cell"><svg viewBox="0 0 40 40"><path d="M20 3l3 5 5-3 1 6 6-1-2 6 5 3-5 3 2 6-6-1-1 6-5-3-3 5-3-5-5 3-1-6-6 1 2-6-5-3 5-3-2-6 6 1 1-6 5 3z"/><path class="k" d="M18 10h4l-1 12h-2zM18 24h4v4h-4z"/></svg></span>
<span class="cell"><svg viewBox="0 0 40 40"><use href="#drop" x="-1" y="-1" width="22" height="22"/><use href="#drop" x="19" y="-1" width="22" height="22"/><use href="#drop" x="9" y="15" width="22" height="22"/></svg></span>
<span class="cell"><svg viewBox="0 0 40 40"><path d="M20 3c2 10 9 15 9 24a9 9 0 0 1-18 0c0-9 7-14 9-24zm-2 20c-2 3-2 8 2 9-1-3-2-6-2-9z" fill-rule="evenodd"/></svg></span>
<span class="cell"><svg viewBox="0 0 40 40"><rect class="o w25" x="5" y="8" width="30" height="23" rx="2"/><rect x="5" y="8" width="30" height="6"/><rect x="10" y="21" width="10" height="3"/></svg></span>
<span class="cell"><svg viewBox="0 0 40 40"><rect class="o w25" x="5" y="6" width="30" height="23" rx="2"/><path d="M5 30h30v3l-3 1H8l-3-1z"/></svg></span>
<span class="cell"><svg viewBox="0 0 40 40"><use href="#case"/></svg></span>
<span class="cell"><svg viewBox="0 0 40 40"><path d="M7 5h22l6 6v22a2 2 0 0 1-2 2H7a2 2 0 0 1-2-2V7a2 2 0 0 1 2-2z"/><rect class="k" x="19" y="5" width="5" height="9"/></svg></span>
<span class="cell"><svg viewBox="0 0 40 40"><circle cx="20" cy="20" r="15"/><circle class="k" cx="20" cy="20" r="4.500"/></svg></span>
<span class="cell"><svg viewBox="0 0 40 40"><path d="M4 14V8q0-2 2-2h10l2 3 14 2v3zM5 16h33l-3 19H6z"/></svg></span>
<span class="cell"><svg viewBox="0 0 40 40"><rect class="o w25" x="9" y="5" width="22" height="30" rx="2"/><path class="o w25" d="M14 12h12M14 20h12M14 28h12"/></svg></span>
<span class="cell"><svg viewBox="0 0 40 40"><rect class="o w25" x="6" y="9" width="28" height="26" rx="2"/><rect x="6" y="9" width="28" height="6"/><path class="o w25" d="M13 4v7M27 4v7"/></svg></span>

<!-- row 9 -->
<span class="cell"><svg viewBox="0 0 40 40"><path class="o" d="M4 24l6-6 8 8 18-16"/><path class="o" d="M5 36l8-14 8 8 14-8"/></svg></span>
<span class="cell"><svg viewBox="0 0 40 40"><rect x="8" y="26" width="7" height="9"/><rect x="19" y="16" width="7" height="19"/><rect x="29" y="5" width="6" height="30"/></svg></span>
<span class="cell"><svg viewBox="0 0 40 40"><path d="M16 5h8v3h6a2 2 0 0 1 2 2v24a2 2 0 0 1-2 2H10a2 2 0 0 1-2-2V10a2 2 0 0 1 2-2h6z"/><rect class="k" x="10" y="9.500" width="20" height="1.500"/></svg></span>
<span class="cell"><svg viewBox="0 0 40 40"><path class="o w15" d="M9 28L28 6c3-3 9 1 6 5L15 33c-4 4-11-2-8-7L25 8M10 30L29 9"/></svg></span>
<span class="cell"><svg viewBox="0 0 40 40"><path d="M9 7h11v29l-5-6-6 6z"/><path class="o" d="M14 5h13v29"/></svg></span>
<span class="cell"><svg viewBox="0 0 40 40"><path d="M9 4l21 9v25L9 30z"/><path class="o" d="M13 4l20 9v23"/></svg></span>
<span class="cell"><svg viewBox="0 0 40 40"><path class="o" d="M20 9L5 4v26l15 6 15-6V4zM20 9v27M9 12l7 3M9 18l7 3M9 24l7 3M31 12l-7 3M31 18l-7 3M31 24l-7 3"/></svg></span>
<span class="cell"><svg viewBox="0 0 40 40"><path d="M27 7c3-3 7 0 6 4-2 10-10 18-22 22-4 1-6-3-4-6l6-3c2 0 2 2 4 1 4-2 8-6 10-11 1-2-2-3-2-4z"/></svg></span>
<span class="cell"><svg viewBox="0 0 40 40"><path d="M28 4c5 3 8 14 6 24-4-5-12-7-18-6l2 10-6 2-3-10c-3-1-4-3-3-5l1-2c7 0 16-5 21-13zM27 9c-1 2 4 13 5 14 1-5-1-13-5-14z" fill-rule="evenodd"/></svg></span>
<span class="cell"><svg viewBox="0 0 40 40"><path d="M20 3l8 9h-5v12h-6V12h-5z"/><path d="M9 18h4v3h-2l-4 8h6v2h14v-2h6l-4-8h-2v-3h4l6 12v6a1 1 0 0 1-1 1H4a1 1 0 0 1-1-1v-6z"/></svg></span>
<span class="cell"><svg viewBox="0 0 40 40"><path d="M17 3h6v11h5l-8 9-8-9h5z"/><path d="M9 18h4v3h-2l-4 8h6v2h14v-2h6l-4-8h-2v-3h4l6 12v6a1 1 0 0 1-1 1H4a1 1 0 0 1-1-1v-6z"/></svg></span>
<span class="cell"><svg viewBox="0 0 40 40"><rect x="4" y="5" width="32" height="5"/><path d="M6 12h28v22H6z"/><rect class="k" x="15" y="16" width="10" height="3"/></svg></span>
<span class="cell"><svg viewBox="0 0 40 40"><rect class="o w25" x="7" y="5" width="26" height="30" rx="2"/><path d="M11 11h8v8h-8zM22 11h7v2h-7zM22 15h7v2h-7zM22 19h7v2h-7zM11 22h18v2H11zM11 26h18v2H11z"/></svg></span>

<!-- row 10 -->
<span class="cell"><svg viewBox="0 0 40 40"><rect class="o w25" x="11" y="5" width="18" height="30" rx="2"/><rect x="11" y="30" width="18" height="5"/><circle class="k" cx="20" cy="32.500" r="1.200"/></svg></span>
<span class="cell"><svg viewBox="0 0 40 40"><path class="o w25" d="M5 15q15-13 30 0M10 21q10-9 20 0M15 27q5-4 10 0"/><circle cx="20" cy="32" r="3"/></svg></span>
<span class="cell"><svg viewBox="0 0 40 40"><use href="#cam"/></svg></span>
<span class="cell"><svg viewBox="0 0 40 40"><path class="o w3" d="M4 12c9 0 10 4 16 11 3 3 6 4 11 4M4 29c8 0 10-3 13-8M23 16c2-3 4-4 8-4"/><path d="M30 7l7 5-7 5zM30 23l7 5-7 5z"/></svg></span>
<span class="cell"><svg viewBox="0 0 40 40"><path class="o w3" d="M12 17H6v14h28V17H22"/><path d="M18 10l10 7-10 7z"/></svg></span>
<span class="cell"><svg viewBox="0 0 40 40"><use href="#cyc"/></svg></span>
<span class="cell"><svg viewBox="0 0 40 40"><circle class="o" cx="20" cy="20" r="4.500"/><circle class="o w2 dsh" cx="20" cy="20" r="10"/></svg></span>
<span class="cell"><svg viewBox="0 0 40 40"><circle class="o" cx="20" cy="20" r="8"/><path class="o w25 rnd" d="M20 4.500v3.500M20 32v3.500M4.500 20h3.500M32 20h3.500M9 9l2.500 2.500M28.500 28.500L31 31M9 31l2.500-2.500M28.500 11.500L31 9"/></svg></span>
<span class="cell"><svg viewBox="0 0 40 40"><path d="M17 6l-8 4v9c0 5 2 8 4 10l8-10zM25 21l-8 11c8 1 14-1 18-5-3-3-6-5-10-6z"/><path class="o w25" d="M33 5L7 36"/></svg></span>
<span class="cell sel"><svg viewBox="0 0 40 40"><use href="#beam"/></svg></span>
<span class="cell"><svg viewBox="0 0 40 40"><rect x="4" y="11" width="32" height="18" rx="8"/><circle class="k" cx="30" cy="20" r="4"/><circle cx="30" cy="20" r="2"/><path class="k" d="M14 17l5 2 4-3-3 5 4 3-6-2-5 2 2-4z"/></svg></span>
<span class="cell"><svg viewBox="0 0 40 40"><use href="#srch"/></svg></span>
<span class="cell"><svg viewBox="0 0 40 40"><path d="M27 4a9 9 0 0 1 5 16c-2 2-6 2-8 1L13 34c-1 2-4 2-6 1l-1-3 14-20a9 9 0 0 1 7-8zm2 4a3 3 0 1 0 0 6 3 3 0 0 0 0-6z" fill-rule="evenodd"/></svg></span>

<!-- row 11 -->
<span class="cell"><svg viewBox="0 0 40 40"><path class="o w3" d="M14 18v-6a6 6 0 0 1 12 0v6"/><rect x="8" y="17" width="24" height="18" rx="3"/></svg></span>
<span class="cell"><svg viewBox="0 0 40 40"><path class="o w3" d="M14 18v-6a6 6 0 0 1 12 0v5"/><rect x="8" y="18" width="24" height="17" rx="3"/></svg></span>
<span class="cell"><svg viewBox="0 0 40 40"><path d="M13 5c3-2 8-1 11 4 3 6 4 13 11 19 2 3-4 6-12 7-7 1-13 1-14-2 2-9 0-20 4-28z"/><ellipse class="k" cx="21" cy="30" rx="8" ry="2" transform="rotate(-15 21 30)"/></svg></span>
<span class="cell"><svg viewBox="0 0 40 40"><path d="M13 4h14v33l-7-7-7 7z"/></svg></span>
<span class="cell"><svg viewBox="0 0 40 40"><rect class="o w25" x="5" y="21" width="17" height="9" rx="4.500" transform="rotate(-45 13.500 25.500)"/><rect class="o w25" x="18" y="10" width="17" height="9" rx="4.500" transform="rotate(-45 26.500 14.500)"/></svg></span>
<span class="cell"><svg viewBox="0 0 40 40"><path class="o w25" d="M14 17h19v13H8"/><path d="M16 11v11L6 16.500z"/></svg></span>
<span class="cell"><svg viewBox="0 0 40 40"><use href="#fl"/></svg></span>
<span class="cell"><svg viewBox="0 0 40 40"><path d="M4 35l10-12 4 4 6-10 3 4 9-17v31z"/></svg></span>
<span class="cell"><svg viewBox="0 0 40 40"><circle class="o w25" cx="20" cy="20" r="14"/><path class="o w25" d="M20 10v10l4 7"/></svg></span>
<span class="cell"><svg viewBox="0 0 40 40"><path d="M33 4c1 7-1 13-6 18l-1 7-6 5 1-6-6-6-7 2 5-7 6-1C24 10 28 6 33 4zM9 25c3-1 5 2 4 5l-7 4z"/></svg></span>
<span class="cell"><svg viewBox="0 0 40 40"><circle class="o w25" cx="20" cy="20" r="14.500"/><path class="o w25" d="M30 10L10 30"/></svg></span>
    </div>
    </div>
    <div class="sbar">
      <svg viewBox="0 0 16 10"><path d="M4 7l4-4 4 4" fill="none" stroke="#555" stroke-width="1.600"/></svg>
      <div class="track"><div class="thumb"></div></div>
      <svg viewBox="0 0 16 10"><path d="M4 3l4 4 4-4" fill="none" stroke="#555" stroke-width="1.600"/></svg>
    </div>
  </div>

  <ul class="famlist">
    <li class="fam"><svg class="tog"><use href="#plus"/></svg><span>Font Awesome</span><a href="#">by Dave Gandy</a></li>
    <li class="fam"><svg class="tog"><use href="#plus"/></svg><span>Iconia</span><a href="#">by Fabio Duarte Martins</a></li>
    <li class="fam"><svg class="tog"><use href="#plus"/></svg><span>Iconic</span><a href="#">by Sergey Shmidt</a></li>
    <li class="fam"><svg class="tog"><use href="#plus"/></svg><span>Linea</span><a href="#">by Dario Ferrando</a></li>
    <li class="fam"><svg class="tog"><use href="#plus"/></svg><span>Linecons</span><a href="#">by Sergey Shmidt</a></li>
    <li class="fam"><svg class="tog"><use href="#plus"/></svg><span>Line Icons</span><a href="#">by Elegant Themes</a></li>
    <li class="fam"><svg class="tog"><use href="#plus"/></svg><span>Material design icons</span><a href="#">by Google</a></li>
    <li class="fam"><svg class="tog"><use href="#plus"/></svg><span>Octicons</span><a href="#">by Cameron McEfee</a></li>
    <li class="fam"><svg class="tog"><use href="#plus"/></svg><span>Themify</span><a href="#">by themify.me</a></li>
    <li class="fam"><svg class="tog"><use href="#plus"/></svg><span>Typeicons</span><a href="#">by Stephen Hutchings</a></li>
    <li class="fam"><svg class="tog"><use href="#plus"/></svg><span>WPZOOM</span><a href="#">by David Ferreira</a></li>
  </ul>
</section>

<section class="panel p-mid">
  <div class="head h-mid">
    <svg class="hicon" viewBox="0 0 40 40"><circle cx="20" cy="20" r="20" fill="#fff"/><circle cx="20" cy="20" r="19.500" fill="#5a8fb8"/><path clip-path="url(#cH)" d="M28 27l12 13H26z" fill="#2f5f88" fill-opacity=".7"/><circle cx="18" cy="18" r="8.500" fill="#3d6f96" stroke="#fff" stroke-width="3"/><path d="M24.500 24.500L31 31" stroke="#fff" stroke-width="3.500" fill="none"/></svg>
    <h2>Preview &amp; Save</h2>
  </div>
  <div class="preview"><svg class="bigicon"><use href="#beamBig"/></svg></div>
  <div class="lbl">Recent Styles:</div>
  <div class="recent"><svg class="recicon"><use href="#beamBig"/></svg></div>
  <div class="lbl">Selected Icons:</div>
  <div class="selected">
    <div class="selitem"><svg viewBox="0 0 40 40"><use href="#beam"/></svg><svg class="badge" viewBox="0 0 14 14"><circle cx="7" cy="7" r="7" fill="#b94a34"/><path d="M4.500 4.500l5 5M9.500 4.500l-5 5" stroke="#fff" stroke-width="2"/></svg></div>
  </div>
  <button class="savebtn"><svg viewBox="0 0 40 40"><circle cx="20" cy="20" r="20" fill="#fff"/><circle cx="20" cy="20" r="19.500" fill="#796c2e"/><path clip-path="url(#cH)" d="M24 18l16 16v6H22l-8-8z" fill="#3f3a1e" fill-opacity=".75"/><path d="M17 9h6v12h6L20 31 11 21h6z" fill="#fff"/></svg><span>Save Icon</span></button>
</section>

<section class="panel p-right">
  <div class="head h-right">
    <svg class="hicon" viewBox="0 0 40 40"><circle cx="20" cy="20" r="20" fill="#fff"/><circle cx="20" cy="20" r="19.500" fill="#bb4125"/><path clip-path="url(#cH)" d="M15 27l14 13 11-10-14-14z" fill="#6b2414" fill-opacity=".7"/><path d="M20 7c2 7 7 10 7 16a7 7 0 0 1-14 0c0-6 5-9 7-16z" fill="#fff"/><path d="M20 19c1 2 2 3 2 5a2 2 0 0 1-4 0c0-2 1-3 2-5z" fill="#bb4125"/></svg>
    <h2>Add Style</h2>
  </div>
  <div class="styles">
<!-- r0 -->
<span class="st"><svg viewBox="0 0 60 60"><path fill="#5b78a8" d="M30 12L6 31l2 3 22-17 22 17 2-3-8-7V13h-8v5zM13 35l17-13 17 13v15H36V38H24v12H13z"/></svg></span>
<span class="st"><svg viewBox="0 0 60 60"><circle cx="30" cy="30" r="25.500" fill="none" stroke="#e45c55" stroke-width="3"/><path fill="#e45c55" d="M13 25h7l9-7v24l-9-7h-7z"/><path fill="none" stroke="#e45c55" stroke-width="2" d="M32 24q4 6 0 12M35 21q6 9 0 18M38 18q8 12 0 24"/></svg></span>
<span class="st"><svg viewBox="0 0 60 60"><circle cx="30" cy="30" r="26" fill="#ff9f94"/><path fill="none" stroke="#fff" stroke-width="1.800" d="M18 28c5-2 10-8 11-14 0-2 5-1 5 3 0 4-2 7-2 9h11c3 0 3 4 1 5 2 2 1 5-1 6 1 2 0 5-2 5 0 3-2 4-4 4H24l-6-1zM12 28h6v19h-6z"/></svg></span>
<span class="st"><svg viewBox="0 0 60 60"><rect x="5" y="5" width="50" height="50" fill="none" stroke="#ffcd00" stroke-width="4"/><circle cx="30" cy="30" r="9" fill="none" stroke="#ffcd00" stroke-width="6"/><circle cx="30" cy="30" r="12.500" fill="none" stroke="#ffcd00" stroke-width="5" stroke-dasharray="5.500 4.300"/></svg></span>
<span class="st"><svg viewBox="0 0 60 60"><rect x="1.500" y="1.500" width="57" height="57" fill="#2a96e6"/><path fill="#fff" d="M15 43a8 8 0 0 1-2-15 9 9 0 0 1 11-5c4-9 19-8 21 4a8 8 0 0 1 1 16z"/></svg></span>
<span class="st"><svg viewBox="0 0 60 60"><rect x="4.500" y="4.500" width="51" height="51" rx="13" fill="#7878bf"/><rect x="25" y="14" width="10" height="22" rx="5" fill="none" stroke="#fff" stroke-width="2"/><path d="M19 29a11 11 0 0 0 22 0M30 40v7M21 47.500h18" fill="none" stroke="#fff" stroke-width="2"/></svg></span>
<!-- r1 -->
<span class="st"><svg viewBox="0 0 60 60"><path fill="#fff" d="M4 16h5v5H4zM4 26h5v5H4zM4 36h5v5H4z"/><rect x="8" y="5" width="46.500" height="49" rx="6" fill="#29abe2" stroke="#fff" stroke-width="1.500"/><rect x="17" y="10" width="32" height="39" fill="none" stroke="#fff"/><circle cx="33" cy="24" r="6.500" fill="#29abe2" stroke="#fff" stroke-width="1.500"/><ellipse cx="33" cy="38" rx="8" ry="4" fill="#29abe2" stroke="#fff" stroke-width="1.500"/><path d="M5 17h8M5 27h8M5 37h8" stroke="#29abe2" stroke-width="3"/></svg></span>
<span class="st"><svg viewBox="0 0 60 60"><circle cx="30" cy="30" r="28.500" fill="#fff"/><circle cx="30" cy="29" r="28" fill="url(#gFl)"/><path clip-path="url(#c60)" fill="#c65a50" fill-opacity=".7" d="M42 13l18 22-25 25-25-14z"/><use href="#fl" x="8" y="7" width="46" height="46" fill="#fff"/></svg></span>
<span class="st"><svg viewBox="0 0 60 60"><rect x="2" y="2" width="56" height="56" rx="10" fill="none" stroke="#bbb" stroke-width="1"/><path fill="none" stroke="#bbb" d="M10 19h10l4-5h12l4 5h10v27H10zM12 21v23h36V21"/><circle cx="30" cy="32" r="11" fill="none" stroke="#bbb"/><circle cx="30" cy="32" r="8" fill="none" stroke="#bbb"/></svg></span>
<span class="st"><svg viewBox="0 0 60 60"><circle cx="30" cy="30" r="28.500" fill="#ecc647"/><use href="#leaf" x="6" y="6" width="48" height="48" fill="#bf9e3e"/></svg></span>
<span class="st lock"><svg viewBox="0 0 60 60"><circle cx="30" cy="30" r="28" fill="#c9c9ff"/><use href="#bulb" x="4" y="5" width="52" height="52" fill="#2c3e50" color="#2c3e50"/></svg><svg class="lk"><use href="#lk"/></svg></span>
<span class="st lock"><svg viewBox="0 0 60 60"><circle cx="30" cy="31" r="25" fill="#7d93a8" fill-opacity=".6"/><circle cx="30" cy="29" r="24.500" fill="url(#gCam)"/><path fill="none" stroke="#1c4a70" stroke-width="2.200" d="M20 20l2-3h11l2 3h6c1 0 2 1 2 2v15c0 1-1 2-2 2H18c-1 0-2-1-2-2V22c0-1 1-2 2-2z"/><circle cx="29" cy="29" r="5" fill="none" stroke="#1c4a70" stroke-width="2"/></svg><svg class="lk"><use href="#lk"/></svg></span>
<!-- r2 -->
<span class="st lock"><svg viewBox="0 0 60 60"><circle cx="30" cy="30" r="28" fill="#f2eff4"/><circle cx="30" cy="30" r="22" fill="#6f95c3"/><rect x="17" y="23" width="25" height="14" rx="3" fill="none" stroke="#fff" stroke-width="1.800"/><path d="M43 27v6" stroke="#fff" stroke-width="2"/><path d="M21 30h5l2-3 2 6 2-3h5" fill="none" stroke="#fff"/></svg><svg class="lk"><use href="#lk"/></svg></span>
<span class="st lock"><svg viewBox="0 0 60 60"><rect x="5" y="3" width="52" height="53" rx="5" fill="#4a4a4a" fill-opacity=".65"/><rect x="3" y="2" width="51" height="49" rx="5" fill="#d58a4a"/><path d="M54 26L36 10 14 30l21 21h14c3 0 5-2 5-5z" fill="#97561f"/><path fill="#fff" d="M24 21c-6 2-8 9-5 14 3 5 9 6 13 3l-8-8zM26 19v10l10-9c-3-3-6-2-10-1zM37 22l-8 8 8 8c5-5 4-12 0-16z"/></svg><svg class="lk"><use href="#lk"/></svg></span>
<span class="st lock"><svg viewBox="0 0 60 60"><rect x="4" y="4" width="52" height="52" fill="#86ad9f"/><path fill="#e7d7b5" d="M50 14c2 2 0 5-3 8l-7 7 3 17-4 3-6-14-7 7 1 7-3 2-3-6-5-3 2-3h7l7-7-15-6 3-3 17 2 8-7c2-3 5-4 5-4z"/></svg><svg class="lk"><use href="#lk"/></svg></span>
<span class="st lock"><svg viewBox="0 0 60 60"><rect x="4" y="3.500" width="52" height="52" fill="#5a3162"/><path d="M44 14l12 12v29H35L18 38z" fill="#4a2353"/><path fill="#f0a24d" d="M15 14h30l-3 30-12 4-12-4z"/><path fill="#5a3162" d="M21 20h18l-.5 4H26l.5 4h12l-1 11-7.500 2.500-8-2.500-.5-5h4l.3 2 4.200 1.200 4-1.200.4-4.500h-12z"/></svg><svg class="lk"><use href="#lk"/></svg></span>
<span class="st lock"><svg viewBox="0 0 60 60"><circle cx="30" cy="30" r="28" fill="#bcbcbc" stroke="#dcdcdc"/><rect x="17" y="14" width="27" height="32" fill="none" stroke="#ddd"/><path d="M20 17h21M27 22h13M27 26h13M20 31h21M20 35h21M20 39h21" stroke="#e2e2e2" stroke-width="1.500"/><rect x="20" y="20" width="5" height="6" fill="none" stroke="#e2e2e2"/></svg><svg class="lk"><use href="#lk"/></svg></span>
<span class="st lock"><svg viewBox="0 0 60 60"><circle cx="30" cy="30" r="29" fill="#ef7a98"/><path clip-path="url(#c60)" d="M12 22l-11 14 24 24 25-11 4-14-12 12-22-22z" fill="#c06280"/><circle cx="23" cy="22" r="8" fill="none" stroke="#fff" stroke-width="4.500"/><path d="M28 28l17 19 M36 37l5-5M42 43l4-4" fill="none" stroke="#fff" stroke-width="4.500"/></svg><svg class="lk"><use href="#lk"/></svg></span>
<!-- r3 -->
<span class="st lock"><svg viewBox="0 0 60 60"><circle cx="30" cy="30" r="27.500" fill="#f7a30c"/><path d="M30 2.500a27.500 27.500 0 0 0 0 55z" fill="#f1c40f"/><circle cx="30" cy="31" r="16" fill="none" stroke="#f7e9c0" stroke-width="5"/><path d="M30 21v10h-7" fill="none" stroke="#f7e9c0" stroke-width="3"/></svg><svg class="lk"><use href="#lk"/></svg></span>
<span class="st lock"><svg viewBox="0 0 60 60"><circle cx="30" cy="31.500" r="27.500" fill="#37627d"/><circle cx="30" cy="28" r="27.500" fill="#3d9cc9"/><path fill="#fff" d="M14 43a8 8 0 0 1-1-16 8 8 0 0 1 10-5c4-8 18-7 20 4a8.500 8.500 0 0 1 2 17z"/><path fill="#3d9cc9" d="M30 24l9 10h-6v9h-6v-9h-6z"/></svg><svg class="lk"><use href="#lk"/></svg></span>
<span class="st lock"><svg viewBox="0 0 60 60"><circle cx="30" cy="31" r="27" fill="#c9ece6"/><circle cx="30" cy="28" r="26.500" fill="#2bd3c0" stroke="#fff" stroke-width="1.500"/><path fill="#dff0e0" d="M22 13c5-4 13-1 16 7 3 7 5 14 10 18 2 3-5 5-13 6-7 1-13 0-14-3 1-9-3-21 1-28z"/><ellipse cx="29" cy="41" rx="8" ry="2" fill="#2bd3c0"/></svg><svg class="lk"><use href="#lk"/></svg></span>
<span class="st lock"><svg viewBox="0 0 60 60"><circle cx="30" cy="28.500" r="27.500" fill="#f36c60"/><path fill="none" stroke="#fff" stroke-width="2.200" d="M40 13c3 0 7 4 7 7L24 42c-3 2-9 3-11 2-1-2 0-8 2-11zM35 17l8 8M31 21l8 8M17 35l7 7"/><path d="M14 38c0 3 1 5 4 6l-5 1z" fill="#e04040"/></svg><svg class="lk"><use href="#lk"/></svg></span>
<span class="st lock"><svg viewBox="0 0 60 60"><circle cx="30" cy="29" r="29" fill="#d35400" stroke="#ef9c60"/><path fill="#dddd88" d="M30 48C18 38 11 33 11 24c0-7 6-11 11-10 4 0 7 3 8 6 1-3 4-6 8-6 5-1 11 3 11 10 0 9-7 14-19 24z"/></svg><svg class="lk"><use href="#lk"/></svg></span>
<span class="st lock"><svg viewBox="0 0 60 60"><circle cx="30" cy="28.500" r="29" fill="#f7f2cb"/><path fill="#f1c40f" d="M22 18c0-4 4-7 8-7s8 3 8 7zM19 20h10v26c-6-1-10-5-11-11-1-6 0-11 1-15zM31 20h10c1 4 2 9 1 15-1 6-5 10-11 11z"/><path d="M17 22l-6-5M43 22l6-5M16 31H9M44 31h7M18 40l-7 5M42 40l7 5" stroke="#f1c40f" stroke-width="3" fill="none"/></svg><svg class="lk"><use href="#lk"/></svg></span>
<!-- r4 -->
<span class="st lock"><svg viewBox="0 0 60 60"><rect x="2" y="2" width="56" height="56" fill="#6fc8b4"/><path d="M40 20l18 18v20H34L16 40z" fill="#2dbba8"/><circle cx="26" cy="23" r="11" fill="#2dbba8" stroke="#fff" stroke-width="4"/><path d="M34 31l11 13" stroke="#fff" stroke-width="4.500" stroke-linecap="round"/></svg><svg class="lk"><use href="#lk"/></svg></span>
<span class="st lock"><svg viewBox="0 0 60 60"><rect x="1.500" y="1.500" width="57" height="57" fill="url(#gMus)"/><path fill="#fff" d="M24 19l25-6v30a7 6 0 1 1-5-6V21l-15 4v22a7 6 0 1 1-5-6z"/></svg><svg class="lk"><use href="#lk"/></svg></span>
<span class="st lock"><svg viewBox="0 0 60 60"><rect x="2" y="1.500" width="56" height="56" fill="url(#gChk)"/><path d="M14 26l15 15 21-20" fill="none" stroke="#fff" stroke-width="8.500" stroke-linejoin="round"/></svg><svg class="lk"><use href="#lk"/></svg></span>
<span class="st lock"><svg viewBox="0 0 60 60"><rect x="2" y="1.500" width="56.500" height="56.500" rx="11" fill="url(#gPlay)"/><path fill="#fff" d="M18 10l33 20-33 20z"/></svg><svg class="lk"><use href="#lk"/></svg></span>
<span class="st lock"><svg viewBox="0 0 60 60"><rect x="2.500" y="2" width="55" height="55" rx="6" fill="#c45c5e" stroke="#fff" stroke-width="1.500"/><path d="M30 2.800H9a6 6 0 0 0-6 6V51a6 6 0 0 0 6 5.200h21z" fill="#e0686a"/><use href="#cyc" x="6" y="6" width="48" height="48" fill="#fff" color="#fff"/></svg><svg class="lk"><use href="#lk"/></svg></span>
<span class="st lock"><svg viewBox="0 0 60 60"><rect x="2" y="1.500" width="56.500" height="56.500" rx="5" fill="#ca2f2c"/><circle cx="19" cy="40" r="4.500" fill="#fff"/><path d="M16 26c10 0 17 7 17 18M15 14c18 0 28 12 28 30" fill="none" stroke="#fff" stroke-width="6.500"/></svg><svg class="lk"><use href="#lk"/></svg></span>
<!-- r5 -->
<span class="st lock"><svg viewBox="0 0 60 60"><rect x="4" y="4" width="50" height="50" rx="12" fill="url(#gBlk)"/><circle cx="28" cy="31" r="16" fill="none" stroke="#fdf0cf" stroke-width="3.500"/><path d="M17 42l22-22" stroke="#fdf0cf" stroke-width="3.500"/></svg><svg class="lk"><use href="#lk"/></svg></span>
<span class="st lock"><svg viewBox="0 0 60 60"><rect x="1.500" y="1.500" width="57" height="57" rx="6" fill="url(#gX)"/><path d="M45 27L27 47h31V40z" fill="#d24e10" fill-opacity=".6"/><path d="M18 19l24 24M42 19L18 43" fill="none" stroke="#fff" stroke-width="8" stroke-linecap="round"/></svg><svg class="lk"><use href="#lk"/></svg></span>
<span class="st lock"><svg viewBox="0 0 60 60"><rect x="7" y="2" width="52" height="52" rx="13" fill="#e85d50"/><path d="M7 26v15c0 7 6 13 13 13h14L56 32 40 20z" fill="#ab4238"/><use href="#case" x="13" y="5" width="50" height="50" fill="#fbe3df"/></svg><svg class="lk"><use href="#lk"/></svg></span>
<span class="st lock"><svg viewBox="0 0 60 60"><rect x="2" y="2" width="56" height="56" rx="8" fill="#7a78b8" stroke="#e5e5ef" stroke-width="1.500"/><path d="M36 16l21 26v8c0 4-3 7-7 7H26L22 50z" fill="#4f4d7c"/><path d="M2.800 30h54.400" stroke="#b6b5de"/><circle cx="34" cy="14" r="3.500" fill="#fff"/><text class="ii" x="28" y="47" font-size="34">i</text></svg><svg class="lk"><use href="#lk"/></svg></span>
<span class="st lock"><svg viewBox="0 0 60 60"><rect x="2.500" y="3" width="55" height="56" rx="7" fill="#5da51a"/><rect x="2.500" y="2.500" width="55" height="53" rx="7" fill="#6bcb22"/><path fill="#fff" d="M10 15h40l-20 13zM10 20l20 13 20-13v23c0 1-1 2-2 2H12c-1 0-2-1-2-2z"/></svg><svg class="lk"><use href="#lk"/></svg></span>
<span class="st lock"><svg viewBox="0 0 60 60"><rect x="2" y="2" width="56" height="57" rx="8" fill="#3a5a92"/><path d="M40 20L58 38v13c0 4-3 8-8 8H32L18 44z" fill="#162b55"/><path d="M30 12l5.500 13H49l-11 9 4 14-12-8-12 8 4-14-11-9h13.500z" fill="#1e3160" stroke="#c94040" stroke-width="2.500"/></svg><svg class="lk"><use href="#lk"/></svg></span>
<!-- r6 -->
<span class="st lock"><svg viewBox="0 0 60 60"><rect x="9" y="9" width="42" height="42" rx="3" transform="rotate(45 30 30)" fill="#3498db"/><path d="M3 34l26 26 4-4-26-26zM8 27l26 26 4-4-26-26z" fill="#2f70c6" fill-opacity=".7"/><circle cx="30" cy="30" r="7" fill="none" stroke="#fff" stroke-width="2.500"/><path d="M30 15v4M30 41v4M15 30h4M41 30h4M19 19l3 3M38 38l3 3M19 41l3-3M38 22l3-3" stroke="#fff" stroke-width="2.500" stroke-linecap="round"/></svg><svg class="lk"><use href="#lk"/></svg></span>
<span class="st lock"><svg viewBox="0 0 60 60"><circle cx="30" cy="30" r="26" fill="#f1f1f1" stroke="#5a45a0" stroke-width="4"/><path d="M21 15h18c0 6-2 11-7 15 5 4 7 9 7 15H21c0-6 2-11 7-15-5-4-7-9-7-15z" fill="#f9d9b8" stroke="#f6b98a" stroke-width="1.500"/></svg><svg class="lk"><use href="#lk"/></svg></span>
<span class="st lock"><svg viewBox="0 0 60 60"><circle cx="37" cy="37" r="25" fill="#555"/><circle cx="28" cy="28" r="25" fill="#fff"/><circle cx="29" cy="28" r="16" fill="#32c4bd"/><circle cx="29" cy="28" r="11" fill="#eee" stroke="#2c8b9c"/><path d="M29 20v8h-6" fill="none" stroke="#2c8b9c" stroke-width="2"/></svg><svg class="lk"><use href="#lk"/></svg></span>
<span class="st lock"><svg viewBox="0 0 60 60"><rect x="2" y="2" width="56.500" height="56.500" rx="4" fill="#4f9cb8"/><path d="M58 2v24L26 58H3L58 2z" fill="#2c5f72" fill-opacity=".55"/><path d="M45 24v27c0 4-3 7-7 7H26L16 48z" fill="#2c5f72"/><path d="M30 11c5 3 11 4 15 4 1 18-4 28-15 33C19 43 14 33 15 15c4 0 10-1 15-4z" fill="#eef0f8" stroke="#2c5f72" stroke-width="2"/></svg><svg class="lk"><use href="#lk"/></svg></span>
<span class="st lock"><svg viewBox="0 0 60 60"><rect x="1.500" y="1.500" width="57" height="57" rx="4" fill="#9a2025"/><rect x="1.500" y="1.500" width="14" height="57" fill="#7a161b"/><rect x="29" y="1.500" width="15" height="57" fill="#7a161b"/><ellipse cx="33" cy="29" rx="14" ry="14.500" fill="#ddd"/><path d="M21 35l1 10 8-5z" fill="#ddd"/></svg><svg class="lk"><use href="#lk"/></svg></span>
<span class="st lock"><svg viewBox="0 0 60 60"><circle cx="31" cy="30" r="26.500" fill="#d0d0d0"/><circle cx="31" cy="30" r="18.500" fill="#80f0b8"/><path d="M24 36a9 9 0 0 1 4-15M33 21a9 9 0 0 1 1 18l-4 1" fill="none" stroke="#fff" stroke-width="2.200"/></svg><svg class="lk"><use href="#lk"/></svg></span>
<!-- r7 -->
<span class="st lock"><svg viewBox="0 0 60 60"><rect x="4" y="4" width="52" height="52" fill="#ff9900"/><path d="M56 4v52H4z" fill="#a86a00" fill-opacity=".8"/><path d="M13 24h9l3-5h14l3 5h6v20H13z" fill="none" stroke="#fde5c0" stroke-width="1.200"/><circle cx="30" cy="34" r="9" fill="none" stroke="#fde5c0" stroke-width="1.200"/><circle cx="30" cy="34" r="6" fill="none" stroke="#fde5c0" stroke-width="1.200"/></svg><svg class="lk"><use href="#lk"/></svg></span>
<span class="st lock"><svg viewBox="0 0 60 60"><circle cx="31" cy="31" r="24" fill="#777"/><circle cx="30" cy="30" r="24" fill="#14b5e8"/><use href="#drop" x="15" y="10" width="30" height="30" fill="#fff"/><path d="M34 31q0 4-4 5" stroke="#14b5e8" fill="none"/></svg><svg class="lk"><use href="#lk"/></svg></span>
<span class="st lock"><svg viewBox="0 0 60 60"><circle cx="31" cy="31" r="26" fill="#777" fill-opacity=".6"/><circle cx="30" cy="29.500" r="25" fill="url(#gPin)" stroke="#fff" stroke-width="1.800"/><circle cx="30" cy="18" r="6.500" fill="none" stroke="#fff" stroke-width="1.600"/><path d="M30 24.500v25" stroke="#fff" stroke-width="1.600"/><path d="M28 16l4 3" stroke="#fff" stroke-width="1.600"/></svg><svg class="lk"><use href="#lk"/></svg></span>
<span class="st lock"><svg viewBox="0 0 60 60"><circle cx="30" cy="29" r="28.500" fill="#eda50a"/><circle cx="30" cy="29" r="24" fill="url(#gSun)" stroke="#f5c75a"/><circle cx="30" cy="29" r="7" fill="#f5f5f5"/><path d="M30 15v5M30 38v5M16 29h5M39 29h5M20 19l3 3M37 36l3 3M20 39l3-3M37 22l3-3" stroke="#f5f5f5" stroke-width="2.500" stroke-linecap="round"/></svg><svg class="lk"><use href="#lk"/></svg></span>
<span class="st lock"><svg viewBox="0 0 60 60"><rect x="3" y="6" width="52" height="53" rx="2" fill="#777" fill-opacity=".55"/><rect x="5" y="3" width="50" height="50" rx="2" fill="#e85080"/><path d="M5 42v11h19l4-4-10-16z" fill="#b93f69"/><path d="M20 40l-2-7 21-19c2-2 6-2 8 0s2 6 0 8L27 41z" fill="#f4f4f8"/><circle cx="42" cy="18" r="2" fill="#e85080"/><path d="M19 31l2 8 6 1" fill="none" stroke="#e85080"/></svg><svg class="lk"><use href="#lk"/></svg></span>
  </div>
  <div class="swatches">
    <span class="sw sw1"></span><span class="sw sw2"></span><span class="sw sw3"></span><span class="sw sw4"></span><span class="sw sw5"></span><span class="sw sw6"></span>
  </div>
  <div class="tabs"><span class="tab">Icon</span><span class="tab active">Background</span></div>
  <div class="pane">
    <div class="group">
      <label class="legend"><i class="cb on"></i>Background</label>
      <div class="form">
        <div class="l c12">Color</div>
        <div class="c34 colorrow"><i class="csw"><b class="fill-or"></b></i><span class="hex">#ff9a34</span></div>

        <div class="l c12"><i class="cb on"></i>Gradient</div>
        <div class="c34 combo"><b class="gradprev"></b><i class="tri"></i></div>

        <div class="l c12">Opacity</div>
        <div class="c34 spin"><span>100%</span><i class="arr"><b></b><b></b></i></div>

        <div class="l c12"><i class="cb"></i>Shadow</div>
        <div class="c34 colorrow off"><i class="csw"></i><span class="hex">#FFF</span></div>

        <div class="r dis">X:</div>
        <div class="spin off"><span>2</span><i class="arr"><b></b><b></b></i></div>
        <div class="r dis">Y:</div>
        <div class="spin off"><span>5</span><i class="arr"><b></b><b></b></i></div>

        <div class="r dis">Blur:</div>
        <div class="spin off"><span>0</span><i class="arr"><b></b><b></b></i></div>
        <div class="l c34 dis"><i class="cb off"></i>Long shadow</div>

        <div class="l c12"><i class="cb on"></i>Border</div>
        <div class="c34 colorrow"><i class="csw"><b class="fill-k"></b></i><span class="hex">#000000</span></div>

        <div class="r c12">Width:</div>
        <div class="c34 spin"><span>0</span><i class="arr"><b></b><b></b></i></div>

        <div class="r c12">Radius:</div>
        <div class="c34 spin"><span>100</span><i class="arr"><b></b><b></b></i></div>

        <div class="r">Rotate:</div>
        <div class="c234 spin"><span>0°</span><i class="arr"><b></b><b></b></i></div>
      </div>
    </div>
  </div>
</section>
</main>
<svg class="defs" aria-hidden="true"><defs><symbol id="plus" viewBox="0 0 21 21"><circle cx="10.500" cy="10.500" r="10.500" fill="#1b7e85"/><path d="M10.500 4v13M4 10.500h13" stroke="#fff" stroke-width="4"/></symbol></defs></svg>
</body>
</html>
```
FILE: styles.css
```css
* { box-sizing: border-box; }
html, body { margin: 0; padding: 0; }
body { width: 1920px; height: 1040px; background: #f0f0f0; font-family: Lato, "Liberation Sans", sans-serif; font-size: 12px; color: #111; overflow: hidden; }
.defs { display: block; width: 0; height: 0; overflow: hidden; }

.titlebar { height: 23px; background: #fff; display: flex; align-items: center; padding-left: 4px; }
.appicon { width: 14px; height: 14px; }
.apptitle { margin-left: 5px; font-family: Roboto, sans-serif; font-size: 12px; color: #111; }
.winctl { margin-left: auto; display: flex; padding-right: 3px; }
.winctl svg { width: 45px; height: 20px; }

.panels { display: flex; padding: 29px 5px 0 5px; gap: 7px; height: 1010px; align-items: flex-start; }
.panel { height: 981px; border: 2px solid #dcdcdc; display: flex; flex-direction: column; }
.p-left { width: 713px; }
.p-mid { width: 711px; padding: 0 5px 0 4px; }
.p-right { width: 473px; margin-left: -1px; padding: 0 5px; }

.head { height: 40px; margin-top: -23px; display: flex; align-items: center; align-self: center; background: #f0f0f0; padding: 0 3px; }
.head h2 { margin: 0; font-size: 22px; font-weight: 700; color: #000; letter-spacing: -.4px; white-space: nowrap; }
.hicon { width: 40px; height: 40px; }
.h-left { gap: 12px; margin-left: 7px; }
.h-mid { gap: 17px; margin-left: -5px; }
.h-right { gap: 13px; margin-left: 5px; }

.fam { display: flex; align-items: center; height: 26px; padding-left: 5px; list-style: none; }
.fam-open { height: 20px; margin-top: 8px; }
.tog { width: 21px; height: 21px; flex: none; }
.fam span { margin-left: 13px; font-size: 11px; }
.fam a { margin-left: 6px; margin-top: -2px; color: #0000ee; font-size: 11px; }
.famlist { margin: 2px 0 0; padding: 0; }

.iconbox { margin: 4px 2px 0 3px; height: 620px; border: 1px solid #8a8a8a; background: #f5ebcf; display: flex; }
.scrollarea { flex: 1; overflow: hidden; }
.igrid { display: grid; grid-template-columns: repeat(13, 50px); grid-auto-rows: 50px; margin-top: -34px; padding-left: 3px; color: #795833; }
.cell { display: flex; align-items: center; justify-content: center; }
.cell svg { width: 40px; height: 40px; fill: currentColor; overflow: visible; }
.cell.sel svg { box-sizing: content-box; padding: 1px; border: 1.500px solid #72b98e; border-radius: 8px; }
.o { fill: none; stroke: currentColor; stroke-width: 2; }
.w15 { stroke-width: 1.500; }
.w2 { stroke-width: 2; }
.w25 { stroke-width: 2.500; }
.w3 { stroke-width: 3; }
.w4 { stroke-width: 4; }
.w5 { stroke-width: 5; }
.w6 { stroke-width: 6; }
.k, .kf { fill: #f5ebcf; }
.kc { color: #f5ebcf; }
.ks { fill: none; stroke: #f5ebcf; stroke-width: 1.500; }
.dsh { stroke-dasharray: 2.500 5.350; }
.rnd { stroke-linecap: round; }
.t { font-family: "Liberation Sans", sans-serif; font-weight: 700; text-anchor: middle; fill: currentColor; }
.tk { fill: #f5ebcf; }
.ts { font-family: "Liberation Serif", serif; font-weight: 400; }
.tb { letter-spacing: -1px; }

.sbar { width: 16px; margin-right: 1px; display: flex; flex-direction: column; background: #f0f0f0; }
.sbar svg { height: 17px; width: 16px; flex: none; }
.track { flex: 1; display: flex; flex-direction: column; justify-content: flex-end; }
.thumb { height: 325px; background: #c8c8c8; }

.preview { margin-top: 5px; height: 695px; display: flex; align-items: center; justify-content: center; background: repeating-conic-gradient(#646464 0 25%, #929292 0 50%) 8px 8px / 20px 20px; }
.bigicon { width: 140px; height: 140px; margin-top: -2px; }
.lbl { height: 19px; line-height: 20px; font-size: 11.500px; letter-spacing: -.1px; }
.recent { height: 100px; background: #a8a8a8; border: 1px solid #7f7f8c; padding: 10px 0 0 13px; }
.recicon { width: 52px; height: 52px; display: block; }
.selected { height: 60px; background: #f5ebcf; border: 1px solid #7f7f8c; padding: 9px 0 0 1px; }
.selitem { position: relative; width: 60px; height: 40px; border: 2px solid #39a9cd; border-radius: 8px; display: flex; padding-left: 7px; align-items: center; color: #000; }
.selitem > svg:first-child { width: 36px; height: 36px; fill: #000; }
.badge { position: absolute; right: -1px; top: -1px; width: 14px; height: 14px; }
.savebtn { margin: 4px auto 0; width: 147px; height: 54px; padding: 0 0 0 6px; display: flex; align-items: center; background: #e1e1e1; border: 1px solid #adadad; font-family: Lato, sans-serif; color: #000; }
.savebtn svg { width: 40px; height: 40px; flex: none; }
.savebtn span { margin-left: 8px; font-size: 22px; white-space: nowrap; letter-spacing: -.1px; }

.styles { margin-top: 5px; height: 614px; background: #a8a8a8; border: 1px solid #7f7f8c; display: grid; grid-template-columns: repeat(6, 71px); grid-auto-rows: 70px; align-content: start; padding: 1px 0 0 3px; }
.st { position: relative; display: flex; align-items: center; justify-content: center; }
.st > svg:first-child { width: 60px; height: 60px; overflow: visible; }
.lk { position: absolute; left: 15px; top: 12px; width: 12px; height: 15px; }
.ii { font-family: "Liberation Serif", serif; font-style: italic; font-weight: 700; fill: #f4f4f8; }

.swatches { margin-top: 6px; padding-left: 44px; display: flex; gap: 50px; }
.sw { width: 20px; height: 20px; }
.sw1 { background: #b8805b; }
.sw2 { background: #ee4f82; }
.sw3 { background: #97a8a6; }
.sw4 { background: #f29a44; }
.sw5 { background: #3f9bd0; }
.sw6 { background: #ff8450; }

.tabs { margin: 6px 0 0 2px; display: flex; align-items: flex-end; height: 21px; font-weight: 700; font-size: 11.500px; position: relative; z-index: 1; }
.tab { height: 19px; width: 41px; text-align: center; line-height: 19px; background: #f0f0f0; border: 1px solid #dcdcdc; border-bottom: 0; }
.tab.active { height: 21px; width: 85px; line-height: 19px; background: #fff; }
.pane { margin-left: 1px; width: 456px; height: 284px; background: #fff; border: 1px solid #dcdcdc; margin-top: -1px; padding: 11px 5px 0 4px; }
.group { height: 264px; border: 1px solid #dcdcdc; }
.legend { display: flex; width: fit-content; align-items: center; height: 13px; margin-top: -6px; background: #fff; padding-right: 2px; font-size: 11.500px; }
.legend .cb { margin-right: 7px; }
.form { display: grid; margin-top: 5px; padding-left: 4px; grid-template-columns: 106px 106px 105px 106px; column-gap: 4px; row-gap: 4px; grid-template-rows: 20px 46px 18px 19px 18px 18px 19px 18px 18px 18px; }
.l, .r { display: flex; align-items: center; font-size: 11.500px; }
.r { justify-content: flex-end; }
.c12 { grid-column: 1 / 3; }
.c34 { grid-column: 3 / 5; }
.c234 { grid-column: 2 / 5; }
.dis { color: #8a8a8a; }
.cb { width: 13px; height: 13px; border: 1px solid #333; margin-right: 5px; display: inline-block; flex: none; position: relative; background: #fff; }
.cb.on::after { content: ""; position: absolute; left: 2px; top: 1px; width: 8px; height: 5px; border-left: 1px solid #444; border-bottom: 1px solid #444; transform: rotate(-50deg) translate(0, 1px); }
.cb.off { border-color: #ccc; }
.colorrow { display: flex; gap: 6px; align-items: flex-start; }
.csw { width: 15px; height: 15px; margin-top: 2px; border: 1px solid #8a8a8a; padding: 2px; display: block; background: #fff; }
.csw b { display: block; width: 100%; height: 100%; }
.fill-or { background: #ff9a34; }
.fill-k { background: #000; }
.hex { width: 69px; height: 19px; border: 1px solid #7a7a7a; padding-left: 4px; line-height: 17px; font-size: 12px; color: #333; letter-spacing: .2px; background: #fff; }
.colorrow.off .csw { border-color: #aaa; }
.colorrow.off .hex { border: 1px solid #ccc; background: #f0f0f0; color: #8a8a8a; box-shadow: inset 0 0 0 1px #fff; }
.combo { background: #e1e1e1; border: 1px solid #adadad; display: flex; align-items: center; padding-left: 4px; }
.gradprev { width: 40px; height: 40px; background: linear-gradient(#ff9a34, #ff6a45); }
.tri { margin-left: auto; margin-right: 5px; width: 0; height: 0; border: 3.500px solid transparent; border-top: 4px solid #111; border-bottom: 0; }
.spin { border: 1px solid #7a7a7a; display: flex; align-items: center; justify-content: space-between; background: #fff; padding-left: 2px; font-size: 12px; font-weight: 400; color: #111; }
.spin.off { background: #f0f0f0; border-color: #ccc; color: #8a8a8a; }
.arr { width: 14px; height: 16px; border: 1px solid #d5d5d5; display: flex; flex-direction: column; flex: none; }
.arr b { flex: 1; display: flex; align-items: center; justify-content: center; }
.arr b:first-child::after { content: ""; border: 3px solid transparent; border-top: 0; border-bottom: 3px solid #333; }
.arr b:last-child { border-top: 1px solid #d5d5d5; }
.arr b:last-child::after { content: ""; border: 3px solid transparent; border-bottom: 0; border-top: 3px solid #333; }
.spin.off .arr b::after { border-top-color: #888; border-bottom-color: #888; }
.spin.off .arr b:first-child::after { border-top-color: transparent; }
.spin.off .arr b:last-child::after { border-bottom-color: transparent; }
```
